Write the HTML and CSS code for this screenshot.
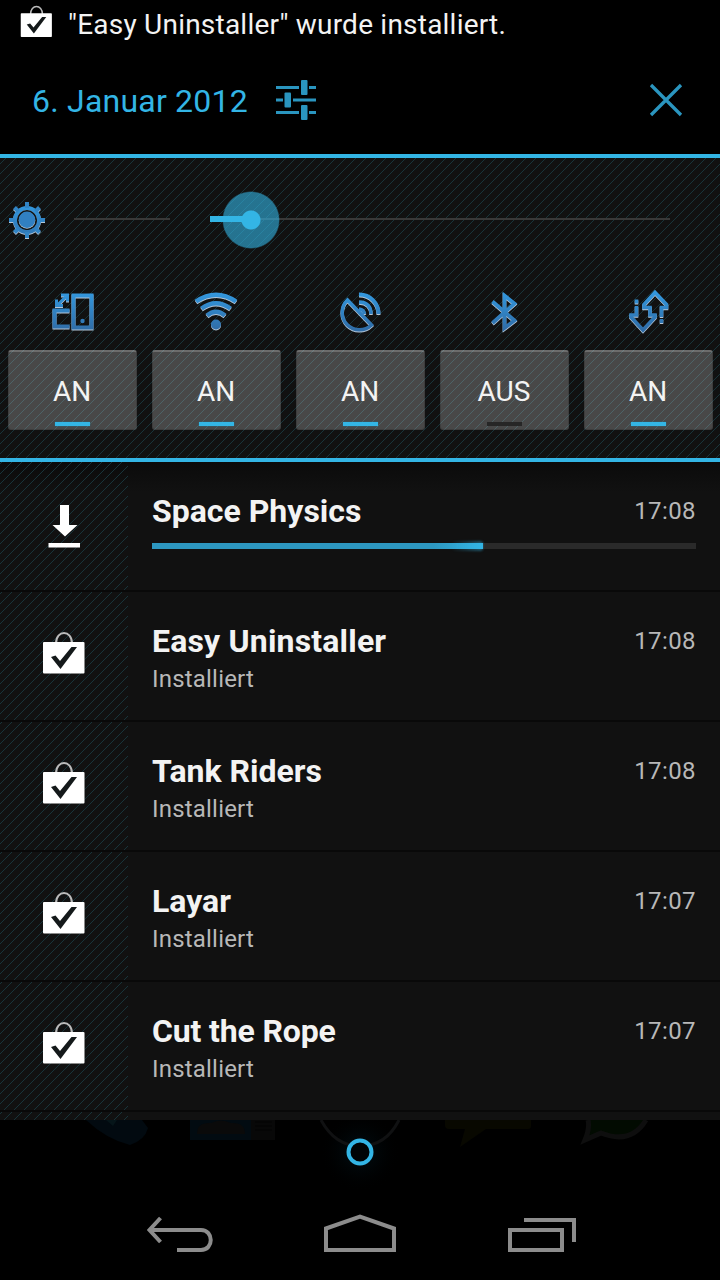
FILE: index.html
```html
<!DOCTYPE html>
<html lang="de">
<head>
<meta charset="utf-8">
<title>Benachrichtigungen</title>
<link rel="stylesheet" href="styles.css">
</head>
<body>
<svg class="defs" width="0" height="0" aria-hidden="true">
  <defs>
    <linearGradient id="blue" gradientUnits="userSpaceOnUse" x1="0" y1="4" x2="0" y2="44">
      <stop offset="0" stop-color="#3399e0"/><stop offset="1" stop-color="#2f6ba5"/>
    </linearGradient>
    <symbol id="bag" viewBox="0 0 44 44">
      <path d="M14 12.500C14 -1.500 30 -1.500 30 12.500" fill="none" stroke="#bbb" stroke-width="2"/>
      <rect x="1" y="11" width="41.500" height="31.500" rx="1" fill="#fff"/>
      <path d="M9 26L13.500 24.500L18 30L29.500 16H35L18.500 38Z" fill="#14191a"/>
    </symbol>
  </defs>
</svg>
<div class="screen">
  <div class="ticker">
    <svg class="ticker-icon" width="33" height="33"><use href="#bag"/></svg>
    <span class="ticker-text">"Easy Uninstaller" wurde installiert.</span>
  </div>
  <header class="header">
    <span class="date">6. Januar 2012</span>
    <svg class="tune" width="40" height="40" viewBox="0 0 40 40" fill="#2a95bf">
      <path d="M0 6h23v3H0zM33 6h7v3h-7zM0 18.500h7v3H0zM17 18.500h23v3H17zM0 31h23v3H0zM33 31h7v3h-7z"/>
      <rect x="25" y="0" width="6.500" height="15" rx="1"/><rect x="8.500" y="12.500" width="6.500" height="15" rx="1"/><rect x="25" y="25" width="6.500" height="15" rx="1"/>
    </svg>
    <svg class="close" width="34" height="34" viewBox="0 0 34 34" fill="none" stroke="#2a95bf" stroke-width="3.300"><path d="M2 2L32 32M32 2L2 32"/></svg>
  </header>
  <section class="panel">
    <div class="brightness">
      <svg class="gear" width="38" height="40" viewBox="0 0 38 40">
        <g class="edge"><g stroke="url(#blue)" fill="none"><circle cx="19" cy="19" r="12" stroke-width="4"/><path d="M19 1v6M19 31v6M1 19.010h6M31 19.010h6M6.500 6.500l4 4M27.500 27.500l4 4M31.500 6.500l-4 4M10.500 27.500l-4 4" stroke="#3184c5" stroke-width="4"/></g></g>
        <circle cx="19" cy="19" r="10" fill="#101416"/>
        <circle cx="19" cy="19.500" r="8.300" fill="#b9c6d2"/>
        <circle cx="19" cy="18.700" r="8.200" fill="#3180c2"/>
      </svg>
      <div class="track-short"></div>
      <div class="slider"><div class="fill"></div><div class="knob"></div></div>
    </div>
    <div class="toggles">
      <div class="toggle">
        <svg class="icon" width="48" height="48"><g class="edge" fill="none" stroke="url(#blue)" stroke-width="4"><path d="M25.500 8H43.500V40H25.500Z"/><path d="M21.500 23H6.500V39H21.500"/><path d="M10 17L18 9" stroke-width="3"/><path d="M13 7.500H19.500V14M8.500 12V18H15" stroke-width="3"/></g><circle cx="34.500" cy="33.500" r="2.200" fill="#3079b8"/></svg>
        <button class="btn on">AN</button>
      </div>
      <div class="toggle">
        <svg class="icon" width="48" height="48"><g class="edge" fill="none" stroke="url(#blue)" stroke-width="4.500"><path d="M4 14Q24 0.500 44 14"/><path d="M9.500 21Q24 10.500 38.500 21"/><path d="M15 28Q24 20.500 33 28"/><circle cx="24" cy="37" r="5" fill="url(#blue)" stroke="none"/></g></svg>
        <button class="btn on">AN</button>
      </div>
      <div class="toggle">
        <svg class="icon" width="48" height="48"><g class="edge" fill="none" stroke="url(#blue)" stroke-width="3.500"><path d="M11.500 12.500A17 17 0 0 0 35.500 37.500Z"/><path d="M23 7A19 19 0 0 1 42.500 26.500" stroke-width="4"/><path d="M23 14.500Q35 15 35 26.500"/><path d="M23 21.500Q28 22 28.500 26.500"/></g></svg>
        <button class="btn on">AN</button>
      </div>
      <div class="toggle">
        <svg class="icon" width="48" height="48"><path class="edge" d="M12.500 14L34.500 33L24.500 40.500V8L34.500 16L12.500 35.500" fill="none" stroke="url(#blue)" stroke-width="3.700"/></svg>
        <button class="btn off">AUS</button>
      </div>
      <div class="toggle">
        <svg class="icon" width="48" height="48"><g class="edge" fill="none" stroke="url(#blue)" stroke-width="3.600"><path d="M12.500 18.500V27.500H7V29.500L19 42.500L31 29.500V27.500H26V20H20V17L31 5L42.500 17V20H37.500V29.500"/><path d="M12.500 12V16M37.500 31.500V35.500"/></g></svg>
        <button class="btn on">AN</button>
      </div>
    </div>
  </section>
  <main class="list">
    <article class="row first">
      <div class="row-icon"><svg width="32" height="44" viewBox="0 0 32 44" fill="#fff"><path d="M12 1h9v20h8.500L17 32.500L4.500 21H12zM.5 39h31.500v4.500H.5z"/></svg></div>
      <div class="content"><div class="line"><h2 class="title">Space Physics</h2><time class="time">17:08</time></div>
      <div class="progress"><div class="bar"></div></div></div>
    </article>
    <article class="row">
      <div class="row-icon"><svg width="44" height="44"><use href="#bag"/></svg></div>
      <div class="content"><div class="line"><h2 class="title wide">Easy Uninstaller</h2><time class="time">17:08</time></div><p class="sub">Installiert</p></div>
    </article>
    <article class="row">
      <div class="row-icon"><svg width="44" height="44"><use href="#bag"/></svg></div>
      <div class="content"><div class="line"><h2 class="title">Tank Riders</h2><time class="time">17:08</time></div><p class="sub">Installiert</p></div>
    </article>
    <article class="row">
      <div class="row-icon"><svg width="44" height="44"><use href="#bag"/></svg></div>
      <div class="content"><div class="line"><h2 class="title">Layar</h2><time class="time">17:07</time></div><p class="sub">Installiert</p></div>
    </article>
    <article class="row">
      <div class="row-icon"><svg width="44" height="44"><use href="#bag"/></svg></div>
      <div class="content"><div class="line"><h2 class="title narrow">Cut the Rope</h2><time class="time">17:07</time></div><p class="sub">Installiert</p></div>
    </article>
    <div class="row cut"><div class="row-icon"></div></div>
  </main>
  <div class="dock">
    <svg width="720" height="80" viewBox="0 0 720 80">
      <defs><radialGradient id="glow"><stop offset="0" stop-color="#03202c"/><stop offset="1" stop-color="#000" stop-opacity="0"/></radialGradient></defs>
      <path d="M86 0Q106 19 130 25Q145 20 148 8L142 0Z" fill="#020a10"/><path d="M106 0L113 6L117 0Z" fill="#061519"/>
      <path d="M190 0H251V20H190Z" fill="#020b11"/><path d="M251 0H275V20H251Z" fill="#080808"/>
      <path d="M197 14Q197 2 211 3Q221 -2 231 3Q245 2 245 14Z" fill="#0a0a0a"/>
      <path d="M255 2h17M255 6h17M255 10h17" stroke="#030303"/>
      <circle cx="360" cy="32" r="40" fill="url(#glow)" opacity=".5"/>
      <path d="M321 0Q335 26 360 26Q386 26 399 0" fill="none" stroke="#101112" stroke-width="3"/>
      <path d="M445 0H531V6Q531 9 528 9H486L460 27L465 9H449Q445 9 445 5Z" fill="#080800"/>
      <path d="M588 0Q590 8 585 20L601 13Q631 25 646 0" fill="#020b01" stroke="#0e0e0e" stroke-width="5"/>
      <circle cx="360" cy="32" r="11.500" fill="#000405" stroke="#33b5e5" stroke-width="4"/>
    </svg>
  </div>
  <nav class="nav">
    <svg class="nav-icon" width="72" height="44" viewBox="144 1212 72 44"><path d="M160.500 1218L149.500 1230L160.500 1242M150 1230H201C214 1230 214 1250 201 1250H177"/></svg>
    <svg class="nav-icon" width="72" height="44" viewBox="325 1212 72 44"><path d="M326 1228.500L360 1216.500L394 1228.500V1250H326Z"/></svg>
    <svg class="nav-icon" width="72" height="44" viewBox="506 1212 72 44"><path d="M510 1230H562V1250H510ZM524 1220H574V1242"/></svg>
  </nav>
</div>
</body>
</html>
```
FILE: styles.css
```css
* { box-sizing: border-box; }
body { margin: 0; background: #000; color: #f3f3f3; font-family: Roboto, "Noto Sans", sans-serif; }
.defs { position: absolute; }
.screen { width: 720px; height: 1280px; overflow: hidden; display: flex; flex-direction: column; }
.ticker { height: 50px; padding-left: 20px; display: flex; align-items: flex-start; }
.ticker-icon { margin-top: 5px; }
.ticker-text { margin-left: 15px; font-size: 28px; line-height: 50px; letter-spacing: .22px; white-space: nowrap; }
.header { height: 104px; padding: 0 37px 4px 32px; display: flex; align-items: center; color: #33b5e5; }
.date { width: 244px; font-size: 32px; line-height: 40px; letter-spacing: .22px; white-space: nowrap; padding-top: 2px; }
.close { margin-left: auto; }
.panel { height: 308px; border-top: 4px solid #33b5e5; border-bottom: 4px solid #33b5e5; background: #111 linear-gradient(135deg, transparent 46.5%, #18343a 46.5%, #18343a 53.5%, transparent 53.5%) 6px 0 / 10px 10px; }
.brightness { height: 123px; padding-left: 8px; display: flex; align-items: center; }
.gear { width: 38px; margin-top: 3px; }
.edge { filter: drop-shadow(0 1px 0 #b4c6d8); }
.track-short { width: 96px; height: 2px; margin: -1px 0 0 28px; background: #383838; }
.slider { width: 460px; height: 58px; margin-left: 40px; position: relative; background: linear-gradient(#383838, #383838) 0 27.500px / 460px 2px no-repeat; }
.fill { position: absolute; left: 0; top: 25.500px; width: 41px; height: 6px; background: #33b5e5; }
.knob { position: absolute; left: 12px; top: 0; width: 58px; height: 58px; border-radius: 50%; background: radial-gradient(circle, #33b5e5 9px, rgba(51,181,229,.6) 10px, rgba(51,181,229,.6) 27.500px, rgba(51,181,229,0) 29px); }
.toggles { display: grid; grid-template-columns: repeat(5, 129px); column-gap: 15px; padding: 6px 0 0 8px; }
.toggle { display: flex; flex-direction: column; align-items: center; }
.icon { margin: 0 1px 15px 0; transform: translate(0, .5px); }
.btn { width: 129px; height: 80px; border: 1px solid rgba(0,0,0,.15); border-top: 2px solid rgba(255,255,255,.2); border-radius: 3px; padding: 20px 1px 3px 0; display: flex; flex-direction: column; align-items: center; justify-content: space-between; background: rgba(255,255,255,.23); font: 28px/40px Roboto, "Noto Sans", sans-serif; color: #f3f3f3; }
.btn::after { content: ""; width: 35px; height: 4px; margin-left: 1px; background: #262626; }
.btn.on::after { background: #33b5e5; box-shadow: 0 0 2px #246b85; }
.list { height: 658px; overflow: hidden; }
.row { height: 130px; display: flex; background: #111; border-bottom: 2px solid #090909; }
.first { background: linear-gradient(#0b0b0b, #111 30px); }
.row-icon { width: 128px; flex: none; display: flex; align-items: center; justify-content: center; background: linear-gradient(135deg, transparent 46.5%, #18343a 46.5%, #18343a 53.5%, transparent 53.5%) 2px 0 / 10px 10px; }
.row-icon svg { margin-top: -6px; }
.first .row-icon svg { margin-top: 0; }
.content { flex: 1; padding: 29px 24px 0; }
.line { display: flex; justify-content: space-between; height: 40px; line-height: 40px; }
.title { margin: 0; font-size: 32px; font-weight: 700; white-space: nowrap; }
.wide { letter-spacing: .18px; }
.narrow { letter-spacing: -.15px; }
.time { font-size: 24px; letter-spacing: .4px; color: #b8b8b8; }
.sub { margin: 0; font-size: 24px; line-height: 36px; letter-spacing: .2px; color: #b8b8b8; }
.progress { height: 6px; margin-top: 12px; background: #2a2a2a; }
.bar { width: 331px; height: 6px; position: relative; background: linear-gradient(90deg, #2d97c0 85%, #33b5e5); }
.bar::after { content: ""; position: absolute; right: 0; top: -2px; width: 32px; height: 10px; border-radius: 3px; background: linear-gradient(90deg, transparent, rgba(51,181,229,.45)); filter: blur(1px); }
.dock { height: 80px; }
.dock svg { display: block; }
.nav { height: 80px; padding: 12px 142px 24px 144px; display: flex; justify-content: space-between; }
.nav-icon { overflow: visible; fill: none; stroke: #8c8c8c; stroke-width: 4; }
```
